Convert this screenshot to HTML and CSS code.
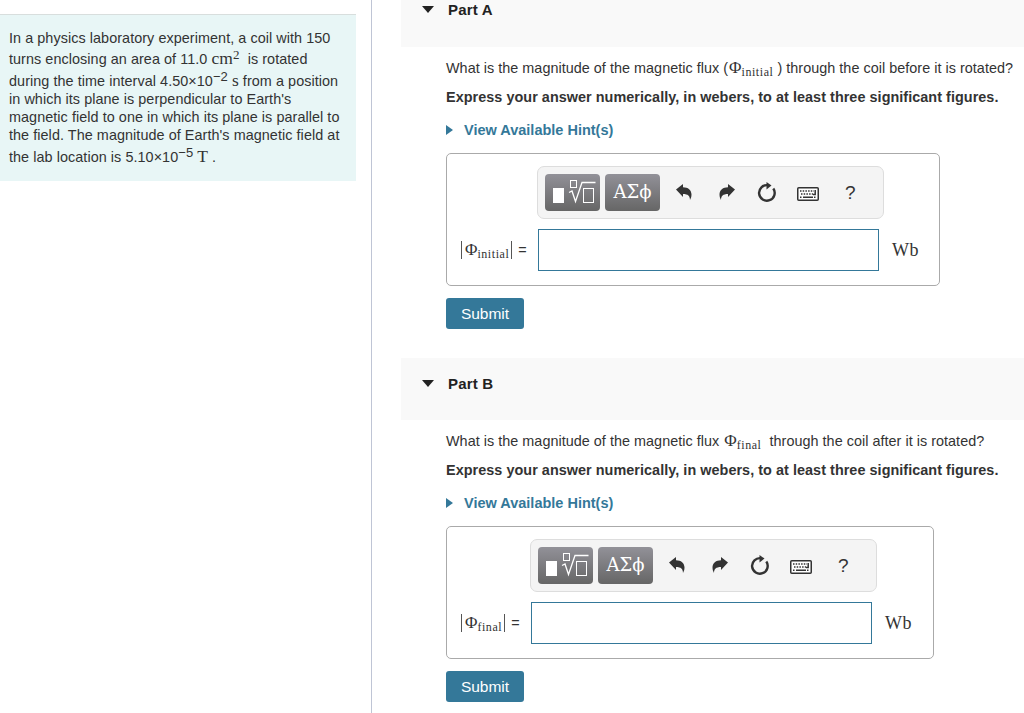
FILE: index.html
```
<!DOCTYPE html>
<html lang="en">
<head>
    <meta charset="utf-8">
    <title>Magnetic Flux</title>
    <link rel="stylesheet" href="styles.css">
</head>
<body>
    <svg class="defs" width="0" height="0">
        <symbol id="templates" viewBox="0 0 55 37">
            <rect x="8" y="14" width="11" height="15" fill="#fff"/>
            <g fill="none" stroke="#fff">
                <rect x="25.500" y="6.500" width="6" height="7"/>
                <path d="M24 18.500l3-1.500 3.500 10.500 6.500-19h13.500" stroke-width="1.300"/>
                <rect x="38.500" y="14.500" width="10" height="14"/>
            </g>
        </symbol>
        <symbol id="undo" viewBox="0 0 16 16">
            <path d="M0 5.500L7 0v3.200c5 0 8.500 2.800 8.500 7.300 0 2.500-.8 4-1.500 5.500 0-4-2-6-7-6v3z"/>
        </symbol>
        <symbol id="redo" viewBox="0 0 16 16">
            <path d="M16 5.500L9 0v3.200C4 3.200.5 6 .5 10.500.5 13 1.300 14.500 2 16c0-4 2-6 7-6v3z"/>
        </symbol>
        <symbol id="reset" viewBox="0 0 20 20">
            <path d="M11 3.200A7.800 7.800 0 1 0 16.300 6.500" fill="none" stroke="#333" stroke-width="2.400"/>
            <path d="M9.500 0l5 3.500-5 4z"/>
        </symbol>
        <symbol id="keyboard" viewBox="0 0 22 14">
            <rect x=".75" y=".75" width="20.500" height="12.500" rx="1" fill="#fff" stroke="#333" stroke-width="1.500"/>
            <path d="M3 4h14M4 7h12M3 10.200h2M17 10.200h2" stroke="#333" stroke-width="1.500" stroke-dasharray="1.500 1.200" fill="none"/>
            <path d="M6 10.200h10M18.200 3v4.500H16" stroke="#333" stroke-width="1.500" fill="none"/>
        </symbol>
    </svg>

    <div class="page">
        <div class="left-col">
            <div class="problem">
                <div class="line">In a physics laboratory experiment, a coil with 150</div>
                <div class="line l2">turns enclosing an area of 11.0 <span class="math">cm<sup>2</sup></span>&nbsp; is rotated</div>
                <div class="line tall">during the time interval 4.50×10<sup>−2</sup> <span class="math">s</span> from a position</div>
                <div class="line">in which its plane is perpendicular to Earth's</div>
                <div class="line">magnetic field to one in which its plane is parallel to</div>
                <div class="line">the field. The magnitude of Earth's magnetic field at</div>
                <div class="line tall">the lab location is 5.10×10<sup>−5</sup> <span class="math">T</span> .</div>
            </div>
        </div>

        <div class="right-col">
            <div class="part">
                <div class="part-header"><span class="arrow-down"></span>Part A</div>
                <div class="part-body">
                    <div class="question">What is the magnitude of the magnetic flux (<span class="math">Φ<sub>initial</sub></span> ) through the coil before it is rotated?</div>
                    <div class="instructions">Express your answer numerically, in webers, to at least three significant figures.</div>
                    <a class="hints"><span class="arrow-right"></span>View Available Hint(s)</a>
                    <div class="answer answer-a">
                        <div class="toolbar">
                            <button class="dark"><svg width="55" height="37"><use href="#templates"/></svg></button>
                            <button class="dark greek">ΑΣϕ</button>
                            <svg class="undo" width="16" height="16"><use href="#undo"/></svg>
                            <svg class="redo" width="16" height="16"><use href="#redo"/></svg>
                            <svg class="reset" width="20" height="20"><use href="#reset"/></svg>
                            <svg class="keyboard" width="22" height="14"><use href="#keyboard"/></svg>
                            <span class="help">?</span>
                        </div>
                        <label for="fluxA"><span class="bar"></span><span class="math">Φ<sub>initial</sub></span><span class="bar"></span><span class="eq">=</span></label>
                        <input type="text" id="fluxA">
                        <span class="unit">Wb</span>
                    </div>
                    <button class="submit">Submit</button>
                </div>
            </div>

            <div class="part">
                <div class="part-header"><span class="arrow-down"></span>Part B</div>
                <div class="part-body">
                    <div class="question">What is the magnitude of the magnetic flux <span class="math">Φ<sub>final</sub></span>&nbsp; through the coil after it is rotated?</div>
                    <div class="instructions">Express your answer numerically, in webers, to at least three significant figures.</div>
                    <a class="hints"><span class="arrow-right"></span>View Available Hint(s)</a>
                    <div class="answer answer-b">
                        <div class="toolbar">
                            <button class="dark"><svg width="55" height="37"><use href="#templates"/></svg></button>
                            <button class="dark greek">ΑΣϕ</button>
                            <svg class="undo" width="16" height="16"><use href="#undo"/></svg>
                            <svg class="redo" width="16" height="16"><use href="#redo"/></svg>
                            <svg class="reset" width="20" height="20"><use href="#reset"/></svg>
                            <svg class="keyboard" width="22" height="14"><use href="#keyboard"/></svg>
                            <span class="help">?</span>
                        </div>
                        <label for="fluxB"><span class="bar"></span><span class="math">Φ<sub>final</sub></span><span class="bar"></span><span class="eq">=</span></label>
                        <input type="text" id="fluxB">
                        <span class="unit">Wb</span>
                    </div>
                    <button class="submit">Submit</button>
                </div>
            </div>
        </div>
    </div>
</body>
</html>
```
FILE: styles.css
```
* {
    box-sizing: border-box;
}
body {
    margin: 0;
    overflow: hidden;
    background: #fff;
    color: #333;
    font-family: "Liberation Sans", Arial, sans-serif;
    font-size: 14.4px;
}
.defs {
    display: block;
}
.page {
    display: flex;
    height: 713px;
}
.left-col {
    width: 371px;
    padding-top: 14px;
}
.problem {
    width: 356px;
    height: 167px;
    padding: 14px 0 0 9px;
    border-top: 1px solid #d8dedd;
    background: #e8f6f6;
}
.line {
    height: 18px;
    line-height: 18px;
    letter-spacing: 0.06px;
    white-space: nowrap;
}
.l2 {
    height: 21px;
    padding-top: 3px;
}
.tall {
    height: 22px;
    padding-top: 4px;
}
.line sup {
    font-size: 13px;
    line-height: 0;
    vertical-align: 5px;
}
.math {
    font-family: "Liberation Serif", serif;
    font-size: 17px;
    line-height: 0;
}
.line .math {
    font-size: 17.5px;
}
.math sub {
    font-size: 12px;
    line-height: 0;
    letter-spacing: 0.55px;
    vertical-align: -3px;
}
.right-col {
    flex: 1;
    overflow: hidden;
    padding-left: 29px;
    border-left: 1px solid #bfc5d5;
}
.part {
    height: 373px;
}
.part:first-child {
    margin-top: -15px;
}
.part-header {
    display: flex;
    align-items: center;
    height: 62px;
    padding: 0 0 12px 21px;
    background: #f9f9f9;
    color: #222;
    font-size: 15px;
    font-weight: bold;
    letter-spacing: 0.2px;
}
.part:first-child .part-header {
    padding-bottom: 13px;
}
.arrow-down {
    margin-right: 14px;
    border: 6px solid transparent;
    border-top: 7px solid #222;
    border-bottom: 0;
}
.part-body {
    padding: 12px 0 0 45px;
}
.question, .instructions {
    height: 29px;
    line-height: 18px;
    letter-spacing: 0.03px;
    white-space: nowrap;
}
.question .math {
    margin-left: 1px;
}
.instructions {
    height: 33px;
    font-weight: bold;
    letter-spacing: 0.05px;
}
.hints {
    display: flex;
    align-items: center;
    height: 18px;
    color: #347899;
    font-size: 14.5px;
    font-weight: bold;
}
.arrow-right {
    margin-right: 11px;
    border: 5.5px solid transparent;
    border-left: 7px solid #347899;
    border-right: 0;
}
.answer {
    display: grid;
    grid-template-columns: 79px 341px 1fr;
    grid-template-rows: 53px 42px;
    row-gap: 10px;
    width: 494px;
    height: 133px;
    margin-top: 14px;
    padding: 12px 0 0 12px;
    border: 1px solid #aaa;
    border-radius: 5px;
}
.answer-b {
    grid-template-columns: 72px 341px 1fr;
    width: 488px;
}
.toolbar {
    grid-column: 2;
    display: flex;
    align-items: center;
    width: 347px;
    margin-left: -1px;
    padding-left: 7px;
    border: 1px solid #ddd;
    border-radius: 7px;
    background: #f4f4f4;
    fill: #333;
}
.dark {
    width: 55px;
    height: 37px;
    margin-right: 5px;
    padding: 0;
    border: 0;
    border-radius: 4px;
    background: linear-gradient(#929198, #666);
    color: #fff;
}
.dark svg {
    display: block;
}
.greek {
    padding-bottom: 3px;
    font-family: "DejaVu Serif", serif;
    font-size: 18px;
}
.undo {
    margin: -2px 0 0 11px;
}
.redo {
    margin: -2px 0 0 27px;
}
.reset {
    margin-left: 22px;
    margin-top: -2px;
}
.keyboard {
    margin: 3px 0 0 20px;
}
.help {
    margin-left: 26px;
    font-size: 19px;
}
.answer label {
    grid-column: 1;
    display: flex;
    align-items: center;
}
.answer label .math {
    line-height: 20px;
}
.bar {
    width: 1px;
    height: 18px;
    margin: 0 3px 0 2px;
    background: #555;
}
.eq {
    margin-left: 3px;
}
.answer input {
    width: 341px;
    height: 42px;
    border: 1px solid #347899;
    background: #fff;
}
.unit {
    align-self: center;
    margin-left: 13px;
    font-family: "Liberation Serif", serif;
    font-size: 18px;
    letter-spacing: 0.6px;
}
.submit {
    display: block;
    width: 78px;
    height: 31px;
    margin-top: 12px;
    padding: 0;
    border: 0;
    border-radius: 3px;
    background: #347899;
    color: #fff;
    font-family: "Liberation Sans", Arial, sans-serif;
    font-size: 15.5px;
}
```
